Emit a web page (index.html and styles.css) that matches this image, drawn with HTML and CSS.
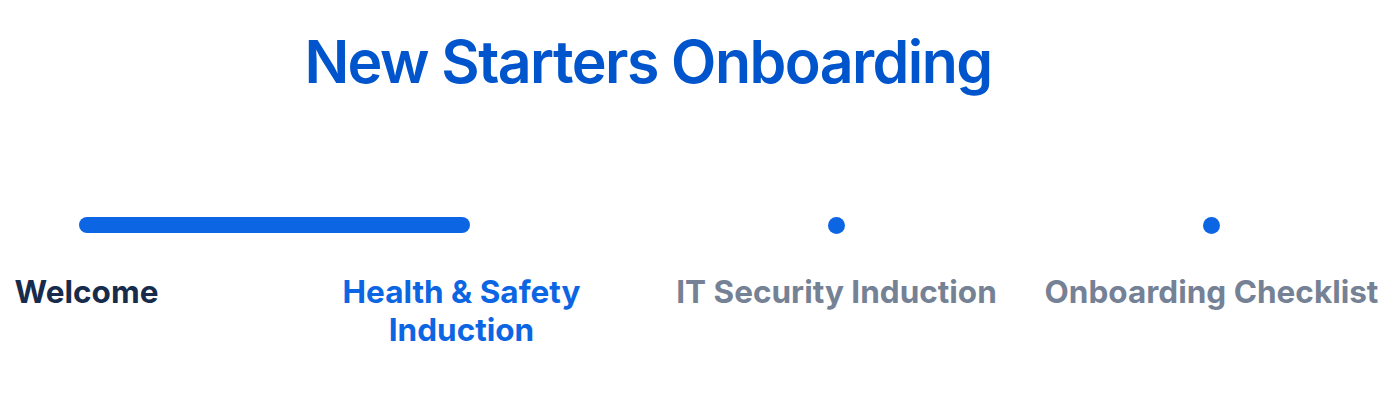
FILE: index.html
```html
<!DOCTYPE html>
<html lang="en">
<head>
    <meta charset="UTF-8">
    <meta name="viewport" content="width=device-width, initial-scale=1.0">
    <title>New Starters Onboarding</title>
    <link rel="stylesheet" href="styles.css">
</head>
<body>
    <div class="page">
        <h1 class="page-title">New Starters Onboarding</h1>

        <div class="tracker">
            <div class="track-bar"></div>
            <span class="dot step-3"></span>
            <span class="dot step-4"></span>

            <div class="label done">Welcome</div>
            <div class="label current">Health &amp; Safety Induction</div>
            <div class="label">IT Security Induction</div>
            <div class="label">Onboarding Checklist</div>
        </div>
    </div>
</body>
</html>
```

FILE: styles.css
```css
* { margin: 0; padding: 0; box-sizing: border-box; }
html, body { overflow: hidden; }
body {
    font-family: Inter, "Noto Sans", sans-serif;
    background: #fff;
    color: #172b4d;
}
.page {
    width: 1400px;
    height: 409px;
}
.page-title {
    width: 1296px;
    padding-top: 26px;
    text-align: center;
    font-size: 59px;
    line-height: 72px;
    font-weight: 600;
    letter-spacing: -1.55px;
    color: #0055cc;
}
.tracker {
    display: grid;
    grid-template-columns: repeat(4, 375px);
    grid-template-rows: 16px auto;
    row-gap: 40px;
    margin-top: 119px;
    margin-left: -101px;
}
.track-bar {
    grid-column: 1 / 3;
    grid-row: 1;
    margin: 0 179.5px;
    height: 16px;
    border-radius: 8px;
    background: #0c66e4;
}
.dot {
    grid-row: 1;
    justify-self: center;
    width: 17px;
    height: 17px;
    border-radius: 50%;
    background: #0c66e4;
}
.step-3 { grid-column: 3; }
.step-4 { grid-column: 4; }
.label {
    grid-row: 2;
    text-align: center;
    font-size: 31.5px;
    line-height: 38px;
    font-weight: 700;
    color: #758195;
    padding: 0 20px;
}
.label.done { color: #172b4d; }
.label.current { color: #0c66e4; }
```
